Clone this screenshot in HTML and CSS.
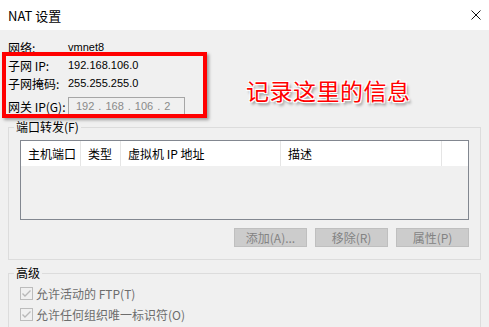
FILE: index.html
```html
<!DOCTYPE html>
<html>

<head>
    <meta charset="utf-8">
    <title>NAT 设置</title>
    <link rel="stylesheet" href="styles.css">
</head>

<body>
    <div class="window">
        <header class="titlebar">
            <span class="title">NAT 设置</span>
            <svg class="close" width="10" height="10" viewBox="0 0 10 10">
                <path d="M0.5 0.5 L9.5 9.5 M9.5 0.5 L0.5 9.5" stroke="#111" stroke-width="1" fill="none" />
            </svg>
        </header>
        <main class="content">
            <section class="info">
                <div class="row"><span class="label">网络:</span><span class="value">vmnet8</span></div>
                <div class="row"><span class="label">子网 IP:</span><span class="value">192.168.106.0</span></div>
                <div class="row"><span class="label">子网掩码:</span><span class="value">255.255.255.0</span></div>
                <div class="row gateway">
                    <span class="label">网关 IP(G):</span>
                    <div class="ip-input">
                        <span>192</span><span>.</span><span>168</span><span>.</span><span>106</span><span>.</span><span>2</span>
                    </div>
                </div>
            </section>
            <fieldset class="group forward">
                <legend>端口转发(F)</legend>
                <div class="listview">
                    <div class="list-head">
                        <div class="col c1">主机端口</div>
                        <div class="col c2">类型</div>
                        <div class="col c3">虚拟机 IP 地址</div>
                        <div class="col c4">描述</div>
                        <div class="col c5"></div>
                    </div>
                </div>
                <div class="buttons">
                    <button disabled>添加(A)...</button>
                    <button disabled>移除(R)</button>
                    <button disabled>属性(P)</button>
                </div>
            </fieldset>
            <fieldset class="group advanced">
                <legend>高级</legend>
                <label class="check">
                    <svg width="13" height="13" viewBox="0 0 13 13">
                        <rect x="0.5" y="0.5" width="12" height="12" fill="#f0f0f0" stroke="#bcbcbc" />
                        <path d="M2.5 6.5 L5 9 L10.5 3.5" stroke="#b8b8b8" stroke-width="1.4" fill="none" />
                    </svg>
                    允许活动的 FTP(T)
                </label>
                <label class="check">
                    <svg width="13" height="13" viewBox="0 0 13 13">
                        <rect x="0.5" y="0.5" width="12" height="12" fill="#f0f0f0" stroke="#bcbcbc" />
                        <path d="M2.5 6.5 L5 9 L10.5 3.5" stroke="#b8b8b8" stroke-width="1.4" fill="none" />
                    </svg>
                    允许任何组织唯一标识符(O)
                </label>
            </fieldset>
        </main>
        <div class="mark-box"></div>
        <div class="mark-note">记录这里的信息</div>
    </div>
</body>

</html>
```

FILE: styles.css
```css
body {
    margin: 0;
    font-family: "Noto Sans CJK SC", sans-serif;
    font-size: 12px;
    color: #000;
    background: #f0f0f0;
    overflow: hidden;
}

.window {
    position: relative;
    width: 489px;
    height: 327px;
    overflow: hidden;
}

.titlebar {
    height: 30px;
    background: #fff;
    display: flex;
    align-items: center;
    justify-content: space-between;
    padding: 0 8px 0 8px;
}

.title {
    font-size: 13px;
}

.content {
    padding: 8px 8px 0 8px;
}

.row {
    display: flex;
    align-items: center;
    height: 18px;
}

.label {
    width: 60px;
    white-space: nowrap;
}

.value {
    font-family: "Liberation Sans", sans-serif;
    font-size: 11px;
}

.gateway {
    margin-top: 5px;
}

.ip-input {
    box-sizing: border-box;
    width: 117px;
    height: 18px;
    border: 1px solid #a6a6a6;
    display: flex;
    align-items: center;
    gap: 4px;
    padding-left: 7px;
    color: #8a8a8a;
    font-family: "Liberation Sans", sans-serif;
    font-size: 11px;
}

.group {
    margin: 4px 0 0 0;
    padding: 5px 11px 12px 11px;
    border: 1px solid #dcdcdc;
    min-inline-size: 0;
}

.group legend {
    padding: 0 2px;
    margin-left: -6px;
    line-height: 16px;
}

.listview {
    height: 80px;
    box-sizing: border-box;
    border: 1px solid #828790;
    background: #f0f0f0;
}

.list-head {
    display: flex;
    height: 25px;
    background: #fff;
}

.col {
    box-sizing: border-box;
    padding-left: 7px;
    line-height: 25px;
    border-right: 1px solid #e5e5e5;
    white-space: nowrap;
}

.c1 { width: 60px; }
.c2 { width: 40px; }
.c3 { width: 160px; }
.c4 { width: 161px; }
.c5 { width: 26px; border-right: 0; }

.buttons {
    display: flex;
    justify-content: flex-end;
    gap: 8px;
    margin-top: 8px;
}

.buttons button {
    width: 73px;
    height: 19px;
    padding: 0;
    font-family: inherit;
    font-size: 12px;
    color: #838383;
    background: #cccccc;
    border: 1px solid #bfbfbf;
    border-radius: 0;
}

.advanced {
    margin-top: 5px;
    padding-top: 2px;
    padding-bottom: 10px;
}

.check {
    display: flex;
    align-items: center;
    gap: 3px;
    height: 21px;
    color: #6d6d6d;
}

.mark-box {
    position: absolute;
    left: 2px;
    top: 52px;
    width: 197px;
    height: 58px;
    border: 4px solid #ff0000;
    box-shadow: 2px 2px 3px rgba(0, 0, 0, 0.35);
}

.mark-note {
    position: absolute;
    left: 246px;
    top: 73px;
    font-size: 23px;
    letter-spacing: 0.5px;
    color: #ff0000;
    text-shadow: -1px -1px 0 #fff, 1px -1px 0 #fff, -1px 1px 0 #fff, 1px 1px 0 #fff,
        2px 3px 3px rgba(0, 0, 0, 0.45);
}
```
